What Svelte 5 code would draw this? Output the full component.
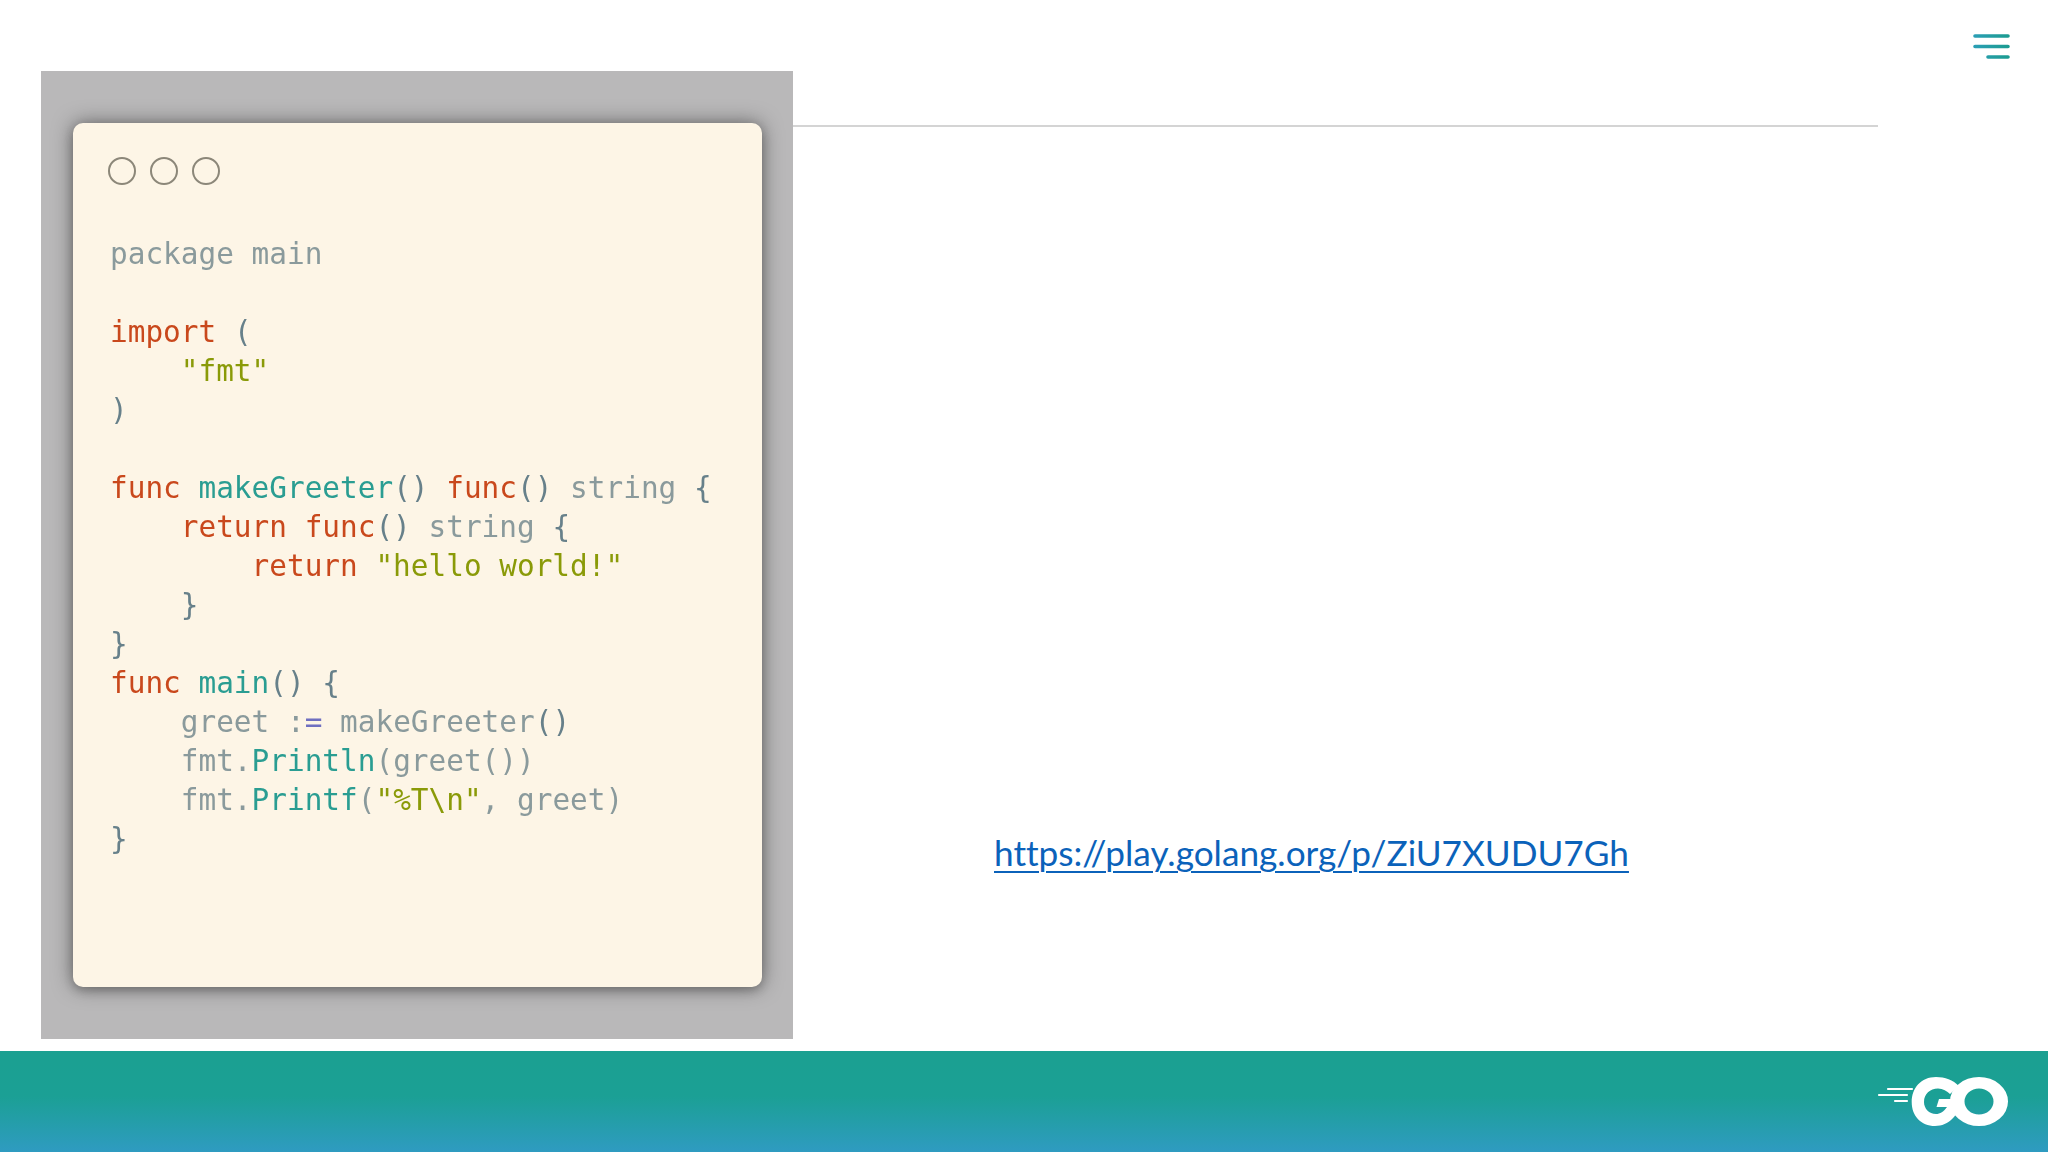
<script lang="ts">
type Token = [string, string];

const kw = "kw";
const fn = "fn";
const str = "str";
const op = "op";
const br = "br";
const tx = "tx";

// one entry per source line
const lines: Token[][] = [
	[[tx, "package main"]],
	[],
	[[kw, "import"], [tx, " "], [br, "("]],
	[[str, '    "fmt"']],
	[[br, ")"]],
	[],
	[[kw, "func"], [tx, " "], [fn, "makeGreeter"], [br, "() "], [kw, "func"], [br, "() "], [tx, "string "], [br, "{"]],
	[[kw, "    return func"], [br, "() "], [tx, "string "], [br, "{"]],
	[[kw, "        return "], [str, '"hello world!"']],
	[[br, "    }"]],
	[[br, "}"]],
	[[kw, "func"], [tx, " "], [fn, "main"], [br, "() {"]],
	[[tx, "    greet :"], [op, "="], [tx, " makeGreeter"], [br, "()"]],
	[[tx, "    fmt."], [fn, "Println"], [tx, "(greet())"]],
	[[tx, "    fmt."], [fn, "Printf"], [tx, "("], [str, '"%T\\n"'], [tx, ", greet)"]],
	[[br, "}"]],
];
</script>

<div class="slide">
	<main class="content">
		<section class="shot">
			<div class="card">
				<div class="dots">
					<span class="dot"></span>
					<span class="dot"></span>
					<span class="dot"></span>
				</div>
				<pre class="code">{#each lines as line}<div class="line">{#each line as [cls, text]}<span class={cls}>{text}</span>{/each}</div>{/each}</pre>
			</div>
		</section>

		<section class="side">
			<div class="rule"></div>
			<a class="link" href="https://play.golang.org/p/ZiU7XUDU7Gh">https://play.golang.org/p/ZiU7XUDU7Gh</a>
		</section>

		<button class="menu" aria-label="Menu">
			<svg width="37" height="25" viewBox="0 0 37 25" fill="none" stroke="url(#menu-grad)" stroke-width="3.6" stroke-linecap="round">
				<defs>
					<linearGradient id="menu-grad" gradientUnits="userSpaceOnUse" x1="0" y1="0" x2="37" y2="0">
						<stop offset="0" stop-color="#2b9fb6" />
						<stop offset="1" stop-color="#1b9b8f" />
					</linearGradient>
				</defs>
				<path d="M2 2h33M2 12.500h33M15 23h20" />
			</svg>
		</button>
	</main>

	<footer class="footer">
		<svg class="logo" width="132" height="52" viewBox="0 0 132 52" aria-label="Go">
			<g fill="none" stroke="#fff" stroke-linecap="round" stroke-width="2.2">
				<path d="M11 13h24M2 19h28M18 25h12" />
			</g>
			<g fill="#fff">
				<path d="M82 10C76 4 68 1 59 1C44 1 34.700 12 34.700 26C34.700 40 44 50 58 50C72 50 82 39 85 23H62L59.500 31H70C67 35.500 63 38 59 38C52 38 47 32.500 47 26C47 18 53 12.500 61 12.500C66 12.500 70 15 73 18Z" />
				<path fill-rule="evenodd" d="M73 25.500a29 24.500 0 1 0 58 0a29 24.500 0 1 0 -58 0ZM87.500 25.500a14.500 13 0 1 1 29 0a14.500 13 0 1 1 -29 0Z" />
			</g>
		</svg>
	</footer>
</div>

<style>
	:global(body) {
		margin: 0;
		background: #fff;
	}

	.slide {
		display: flex;
		flex-direction: column;
		width: 2048px;
		height: 1152px;
		overflow: hidden;
	}

	.content {
		position: relative;
		display: flex;
		align-items: flex-start;
		height: 1051px;
		box-sizing: border-box;
		padding: 71px 170px 0 41px;
	}

	/* ── Code screenshot ── */

	.shot {
		flex: none;
		box-sizing: border-box;
		width: 752px;
		height: 968px;
		padding: 52px 31px 52px 32px;
		background: #b9b8b9;
	}

	.card {
		box-sizing: border-box;
		height: 864px;
		padding: 34px 36px 0 35px;
		background: #fdf5e6;
		border-radius: 10px;
		box-shadow:
			0 0 20px rgba(40, 40, 40, 0.6),
			0 4px 8px rgba(60, 60, 60, 0.25);
	}

	.dots {
		display: flex;
		gap: 14px;
	}

	.dot {
		box-sizing: border-box;
		width: 28px;
		height: 28px;
		border: 2px solid #8c8779;
		border-radius: 50%;
	}

	.code {
		margin: 50px 0 0 2px;
		font-family: "DejaVu Sans Mono", monospace;
		font-size: 29.4px;
		line-height: 39px;
		white-space: pre;
		filter: blur(0.4px);
	}

	.line {
		min-height: 39px;
	}

	.tx { color: #8a9a9c; }
	.br { color: #67808a; }
	.kw { color: #c9481c; }
	.fn { color: #2a9d92; }
	.str { color: #8a9a08; }
	.op { color: #6f6fc0; }

	/* ── Right column ── */

	.side {
		flex: 1;
		display: flex;
		flex-direction: column;
		padding-top: 54px;
	}

	.rule {
		height: 2px;
		background: #d4d4d4;
	}

	.link {
		margin: 699px 0 0 201px;
		font-family: Lato, sans-serif;
		font-variant-ligatures: none;
		font-size: 35.2px;
		line-height: 52px;
		color: #0b62ba;
		text-decoration-thickness: 2px;
		text-underline-offset: 5px;
		white-space: nowrap;
	}

	.menu {
		position: absolute;
		top: 34px;
		right: 38px;
		padding: 0;
		border: 0;
		background: none;
		line-height: 0;
	}

	/* ── Footer ── */

	.footer {
		flex: none;
		box-sizing: border-box;
		display: flex;
		justify-content: flex-end;
		align-items: flex-start;
		height: 101px;
		padding: 25px 39px 0 0;
		background: linear-gradient(180deg, #1ba091 0%, #1ba095 45%, #2f9bc1 100%);
	}
</style>
